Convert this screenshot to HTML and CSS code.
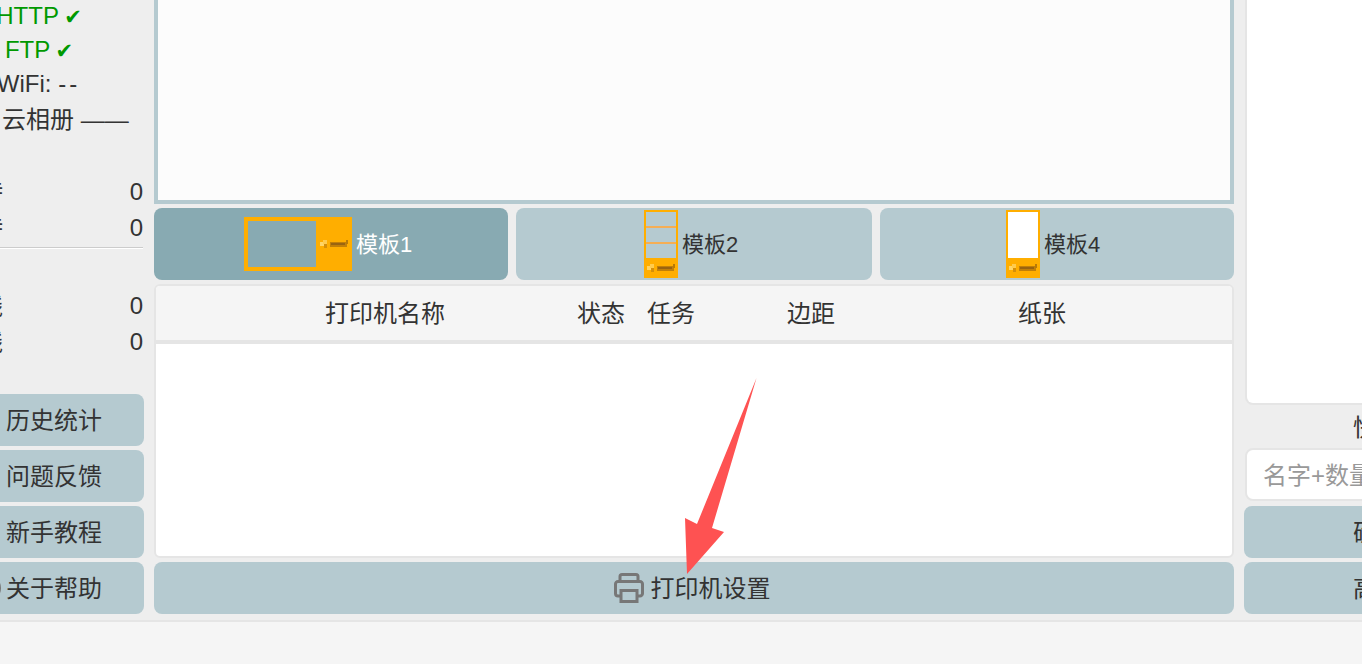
FILE: index.html
```html
<!DOCTYPE html>
<html lang="en">
<head>
<meta charset="UTF-8">
<meta name="viewport" content="width=device-width, initial-scale=1.0">
<title>打印机设置</title>
<link rel="stylesheet" href="styles.css">
</head>
<body>

<svg class="defs" width="0" height="0">
  <symbol id="logo" viewBox="0 0 28 10">
    <rect x="0" y="3" width="4" height="4" fill="#ffd566"/>
    <rect x="3" y="1" width="4" height="4" fill="#ffcb4d"/>
    <rect x="4" y="5" width="3" height="4" fill="#d48f0a"/>
    <rect x="10" y="3" width="17" height="5" fill="#c17f08"/>
    <rect x="11" y="4" width="14" height="2" fill="#9a6410"/>
    <rect x="26" y="1" width="2" height="4" fill="#b87a08"/>
  </symbol>
</svg>

<div class="app">

  <!-- Left column -->
  <div class="side-left">
    <div class="status ok">HTTP <span class="tick">✔</span></div>
    <div class="status ok">FTP <span class="tick">✔</span></div>
    <div class="status wifi">WiFi: <span class="dashes">--</span></div>
    <div class="section-title">—— 云相册 ——</div>

    <div class="stat first"><span class="stat-label">已等待</span><span>0</span></div>
    <div class="stat"><span class="stat-label">未等待</span><span>0</span></div>
    <div class="divider"></div>
    <div class="stat spaced"><span class="stat-label">已在线</span><span>0</span></div>
    <div class="stat"><span class="stat-label">未在线</span><span>0</span></div>

    <div class="side-buttons">
      <button class="btn"><span class="btn-icon"></span>历史统计</button>
      <button class="btn"><span class="btn-icon"></span>问题反馈</button>
      <button class="btn"><span class="btn-icon"></span>新手教程</button>
      <button class="btn"><span class="btn-icon ring"></span>关于帮助</button>
    </div>
  </div>

  <!-- Center column -->
  <div class="main">
    <div class="preview"></div>

    <div class="templates">
      <button class="btn template active">
        <span class="thumb thumb-wide">
          <span class="thumb-hole"></span>
          <svg class="logo-wide"><use href="#logo"/></svg>
        </span>
        模板1
      </button>
      <button class="btn template">
        <span class="thumb thumb-tall">
          <span class="thumb-strips"><i></i><i></i><i></i></span>
          <svg class="logo-tall"><use href="#logo"/></svg>
        </span>
        模板2
      </button>
      <button class="btn template">
        <span class="thumb thumb-tall">
          <span class="thumb-white"></span>
          <svg class="logo-tall"><use href="#logo"/></svg>
        </span>
        模板4
      </button>
    </div>

    <div class="printers">
      <div class="printers-head">
        <span>打印机名称</span>
        <span>状态</span>
        <span>任务</span>
        <span>边距</span>
        <span>纸张</span>
      </div>
    </div>

    <button class="btn printer-btn">
      <svg class="printer-icon" viewBox="0 0 30 30" fill="none" stroke="#777" stroke-width="3">
        <path d="M6 8V3.500A2 2 0 0 1 8 1.500H22A2 2 0 0 1 24 3.500V8"/>
        <path d="M7 23H4A2.500 2.500 0 0 1 1.500 20.500V11A2.500 2.500 0 0 1 4 8.500H26A2.500 2.500 0 0 1 28.500 11V20.500A2.500 2.500 0 0 1 26 23H23"/>
        <path d="M7 17.500H23V28.500H7Z"/>
      </svg>
      打印机设置
    </button>
  </div>

  <!-- Right column -->
  <div class="side-right">
    <div class="card"></div>
    <div class="quick-title">快速添加</div>
    <input class="quick-input" type="text" placeholder="名字+数量">
    <button class="btn right-btn">确认添加</button>
    <button class="btn">高级设置</button>
  </div>

</div>

<div class="footer"></div>

<!-- Annotation arrow -->
<svg class="arrow" width="80" height="200" viewBox="680 378 80 200">
  <polygon points="756.500,378 712,528 724,532 687,574 685,518 697,524" fill="#fe5252"/>
</svg>

</body>
</html>
```

FILE: styles.css
```css
body {
margin: 0;
width: 1362px;
height: 664px;
overflow: hidden;
position: relative;
background-color: #f5f5f5;
color: #333;
font-family: "Liberation Sans", "Noto Sans CJK SC", sans-serif;
font-size: 24px;
}

.defs {
position: absolute;
}

.app {
display: flex;
gap: 10px;
box-sizing: content-box;
width: 1630px;
height: 614px;
padding-bottom: 6px;
margin-left: -68px;
background-color: #eee;
border-bottom: 2px solid #e5e5e5;
}

.btn {
display: flex;
align-items: center;
justify-content: center;
box-sizing: border-box;
height: 52px;
flex-shrink: 0;
padding: 0 0 4px;
border: none;
border-radius: 8px;
background-color: #b5cad0;
color: #333;
font-family: inherit;
font-size: 24px;
}

/* Left column */
.side-left {
width: 212px;
flex-shrink: 0;
display: flex;
flex-direction: column;
justify-content: flex-end;
text-align: center;
}

.status {
height: 34px;
line-height: 32px;
flex-shrink: 0;
}

.ok {
color: #090;
padding-left: 2px;
}

.tick {
margin-left: -1px;
font-family: "DejaVu Sans", sans-serif;
font-size: 21px;
}

.wifi {
padding-left: 1px;
}

.dashes {
letter-spacing: 3px;
}

.section-title {
height: 36px;
line-height: 36px;
flex-shrink: 0;
}

.stat {
display: flex;
justify-content: space-between;
height: 36px;
line-height: 36px;
padding-right: 1px;
flex-shrink: 0;
}

.stat-label {
margin-left: -1px;
}

.stat.first {
margin-top: 36px;
}

.stat.spaced {
margin-top: 39px;
}

.divider {
height: 1px;
margin: 1px 1px 0 0;
background-color: #ccc;
border-bottom: 1px solid #fff;
}

.side-buttons {
display: flex;
flex-direction: column;
gap: 4px;
margin-top: 34px;
}

.btn-icon {
width: 28px;
height: 28px;
margin: 4px 5px 0 -1px;
box-sizing: border-box;
border-radius: 50%;
}

.btn-icon.ring {
border: 3px solid #777;
}

/* Center column */
.main {
width: 1080px;
flex-shrink: 0;
display: flex;
flex-direction: column;
gap: 4px;
}

.preview {
flex: 1;
margin-top: -10px;
background-color: #fcfcfc;
border: 4px solid #b5cad0;
}

.templates {
display: grid;
grid-template-columns: 354px 356px 354px;
gap: 8px;
}

.template {
height: 72px;
gap: 4px;
padding-right: 6px;
font-size: 22px;
}

.template:last-child {
padding-right: 8px;
}

.template.active {
background-color: #88aab2;
color: #fff;
}

.thumb {
display: flex;
margin-top: 4px;
background-color: #ffae00;
flex-shrink: 0;
}

.thumb-wide {
width: 108px;
height: 54px;
align-items: center;
}

.thumb-hole {
width: 68px;
height: 46px;
margin-left: 4px;
background-color: #88aab2;
}

.logo-wide {
width: 28px;
height: 10px;
margin-left: 4px;
}

.thumb-tall {
width: 34px;
height: 68px;
flex-direction: column;
align-items: center;
padding-top: 2px;
box-sizing: border-box;
}

.thumb-strips {
display: flex;
flex-direction: column;
gap: 2px;
width: 30px;
height: 46px;
background-color: #f5ae55;
}

.thumb-strips i {
flex: 1;
background-color: #b5cad0;
}

.thumb-white {
width: 30px;
height: 46px;
background-color: #fff;
}

.logo-tall {
width: 28px;
height: 10px;
margin-top: 5px;
}

.printers {
height: 270px;
background-color: #fff;
border: 2px solid #e5e5e5;
border-radius: 6px;
overflow: hidden;
}

.printers-head {
display: grid;
grid-template-columns: 362px 70px 70px 210px 252px;
padding-left: 48px;
height: 54px;
line-height: 56px;
text-align: center;
background-color: #f5f5f5;
border-bottom: 4px solid #e5e5e5;
}

.printer-btn {
gap: 7px;
padding-right: 4px;
}

.printer-icon {
width: 30px;
height: 30px;
margin-top: 4px;
}

/* Right column */
.side-right {
width: 314px;
flex-shrink: 0;
display: flex;
flex-direction: column;
text-align: center;
}

.card {
flex: 1;
margin-left: 1px;
background-color: #fff;
border: 2px solid #e5e5e5;
border-top: none;
border-radius: 0 0 0 8px;
}

.quick-title {
height: 43px;
line-height: 46px;
flex-shrink: 0;
}

.quick-input {
height: 53px;
flex-shrink: 0;
box-sizing: border-box;
margin: 0 0 5px 1px;
padding: 3px 16px 0;
border: 2px solid #e5e5e5;
border-radius: 8px;
background-color: #fff;
font-family: inherit;
font-size: 24px;
}

.quick-input::placeholder {
color: #999;
}

.right-btn {
margin-bottom: 4px;
}

/* Annotation */
.arrow {
position: absolute;
left: 680px;
top: 378px;
}
```
